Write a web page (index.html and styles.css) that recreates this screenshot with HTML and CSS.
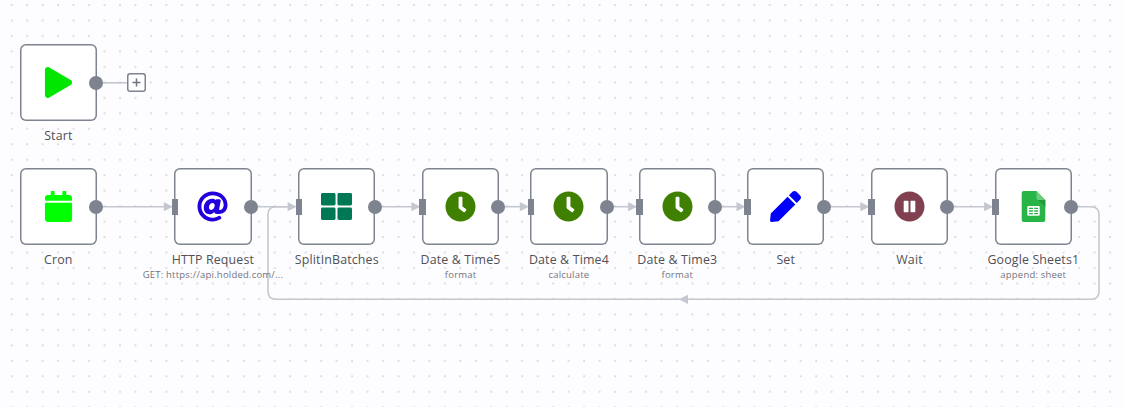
FILE: index.html
```
<!DOCTYPE html>
<html lang="en">
<head>
<meta charset="utf-8">
<title>Workflow</title>
<link rel="stylesheet" href="styles.css">
</head>
<body>
<main class="canvas">
  <svg class="wires" width="1123" height="407">
    <defs>
      <pattern id="grid" x="3.9" y="-2.8" width="15.47" height="15.47" patternUnits="userSpaceOnUse">
        <rect class="dot" x="6.9" y="6.9" width="1.9" height="1.9"/>
      </pattern>
      <path id="arrow" d="M-8.5-4.6L.5 0l-9 4.6z"/>
    </defs>
    <rect width="1123" height="407" fill="url(#grid)"/>
    <g class="line">
      <path d="M96 82.8H127"/>
      <path d="M96 206.7H166"/>
      <path d="M251 206.7H290"/>
      <path d="M375 206.7H414"/>
      <path d="M499 206.7H522"/>
      <path d="M607 206.7H630"/>
      <path d="M715 206.7H738"/>
      <path d="M824 206.7H862"/>
      <path d="M948 206.7H986"/>
      <path d="M1071 206.7H1091Q1099 206.7 1099 214.7V291.3Q1099 299.3 1091 299.3H276Q268 299.3 268 291.3V214.7Q268 206.7 276 206.7H290"/>
    </g>
    <g class="arrows">
      <use href="#arrow" x="172.3" y="206.7"/>
      <use href="#arrow" x="296.1" y="206.7"/>
      <use href="#arrow" x="419.9" y="206.7"/>
      <use href="#arrow" x="528.3" y="206.7"/>
      <use href="#arrow" x="636.6" y="206.7"/>
      <use href="#arrow" x="745" y="206.7"/>
      <use href="#arrow" x="868.8" y="206.7"/>
      <use href="#arrow" x="992.6" y="206.7"/>
      <path d="M688 294.7L679 299.3l9 4.6z"/>
    </g>
  </svg>

  <section class="node" style="left:58.3px;top:82.7px">
    <div class="box"><svg class="icon" viewBox="-32 0 512 512" fill="#00e600"><path d="M424.4 214.7L72.4 6.6C43.8-10.3 0 6.1 0 47.9V464c0 37.5 40.7 60.1 72.4 41.3l352-208c31.4-18.5 31.5-64.1 0-82.6z"/></svg><i class="out"></i></div>
    <div class="name">Start</div>
  </section>
  <button class="plus" aria-label="Add node"><svg width="9" height="9"><path d="M4.5 .5v8M.5 4.5h8"/></svg></button>

  <section class="node" style="left:58.3px;top:206.6px">
    <div class="box"><svg class="icon" viewBox="-32 0 512 512" fill="#00ff00"><path d="M12 192h424c6.6 0 12 5.400 12 12v260c0 26.500-21.500 48-48 48H48c-26.500 0-48-21.500-48-48V204c0-6.600 5.400-12 12-12zm436-44v-36c0-26.500-21.500-48-48-48h-48V12c0-6.600-5.400-12-12-12h-40c-6.600 0-12 5.400-12 12v52H160V12c0-6.600-5.400-12-12-12h-40c-6.600 0-12 5.400-12 12v52H48C21.500 64 0 85.500 0 112v36c0 6.600 5.400 12 12 12h424c6.600 0 12-5.400 12-12z"/></svg><i class="out"></i></div>
    <div class="name">Cron</div>
  </section>

  <section class="node" style="left:212.9px;top:206.6px">
    <div class="box"><svg class="icon" viewBox="0 0 512 512" fill="#2200dd"><path d="M256 8C118.941 8 8 118.919 8 256c0 137.059 110.919 248 248 248 48.154 0 95.342-14.140 135.408-40.223 12.005-7.815 14.625-24.288 5.552-35.372l-10.177-12.433c-7.671-9.371-21.179-11.667-31.373-5.129C325.920 429.757 291.314 440 256 440c-101.458 0-184-82.542-184-184S154.542 72 256 72c100.139 0 184 57.619 184 160 0 38.786-21.093 79.742-58.170 83.693-17.349-.454-16.910-12.857-13.476-30.024l23.433-121.110C394.653 149.750 383.308 136 368.225 136h-44.981a13.518 13.518 0 0 0-13.432 11.993l-.010.092c-14.697-17.901-40.448-21.775-59.971-21.775-74.580 0-137.831 62.234-137.831 151.460 0 65.303 36.785 105.870 96 105.870 26.984 0 57.369-15.637 74.991-38.333 9.522 34.104 40.613 34.104 70.710 34.104C462.609 379.410 504 307.798 504 232 504 95.653 394.023 8 256 8zm-21.680 304.430c-22.249 0-36.070-15.623-36.070-40.771 0-44.993 30.779-72.729 58.624-72.729 22.292 0 35.601 15.241 35.601 40.770 0 45.061-33.875 72.730-58.155 72.730z"/></svg><i class="in"></i><i class="out"></i></div>
    <div class="name">HTTP Request</div><div class="sub">GET: https://api.holded.com/...</div>
  </section>

  <section class="node" style="left:336.8px;top:206.6px">
    <div class="box"><svg class="icon" viewBox="0 0 512 512" fill="#007755"><path d="M296 32h192c13.255 0 24 10.745 24 24v160c0 13.255-10.745 24-24 24H296c-13.255 0-24-10.745-24-24V56c0-13.255 10.745-24 24-24zm-80 0H24C10.745 32 0 42.745 0 56v160c0 13.255 10.745 24 24 24h192c13.255 0 24-10.745 24-24V56c0-13.255-10.745-24-24-24zM0 296v160c0 13.255 10.745 24 24 24h192c13.255 0 24-10.745 24-24V296c0-13.255-10.745-24-24-24H24c-13.255 0-24 10.745-24 24zm296 184h192c13.255 0 24-10.745 24-24V296c0-13.255-10.745-24-24-24H296c-13.255 0-24 10.745-24 24v160c0 13.255 10.745 24 24 24z"/></svg><i class="in"></i><i class="out"></i></div>
    <div class="name">SplitInBatches</div>
  </section>

  <section class="node" style="left:460.600px;top:206.6px">
    <div class="box"><svg class="icon" viewBox="0 0 512 512" fill="#408000"><path id="clock" d="M256,8C119,8,8,119,8,256S119,504,256,504,504,393,504,256,393,8,256,8Zm92.490,313h0l-20,25a16,16,0,0,1-22.490,2.500h0l-67-49.720a40,40,0,0,1-15-31.230V112a16,16,0,0,1,16-16h32a16,16,0,0,1,16,16V256l58,42.500A16,16,0,0,1,348.490,321Z"/></svg><i class="in"></i><i class="out"></i></div>
    <div class="name">Date &amp; Time5</div><div class="sub">format</div>
  </section>

  <section class="node" style="left:568.9px;top:206.6px">
    <div class="box"><svg class="icon" viewBox="0 0 512 512" fill="#408000"><use href="#clock"/></svg><i class="in"></i><i class="out"></i></div>
    <div class="name">Date &amp; Time4</div><div class="sub">calculate</div>
  </section>

  <section class="node" style="left:677.3px;top:206.6px">
    <div class="box"><svg class="icon" viewBox="0 0 512 512" fill="#408000"><use href="#clock"/></svg><i class="in"></i><i class="out"></i></div>
    <div class="name">Date &amp; Time3</div><div class="sub">format</div>
  </section>

  <section class="node" style="left:785.7px;top:206.6px">
    <div class="box"><svg class="icon" viewBox="0 0 512 512" fill="#0000ff"><path d="M290.740 93.240l128.020 128.020-277.990 277.990-114.140 12.600C11.350 513.540-1.560 500.620.140 485.340l12.700-114.220 277.900-277.880zm207.200-19.060l-60.110-60.110c-18.750-18.750-49.160-18.750-67.910 0l-56.550 56.550 128.020 128.020 56.550-56.550c18.750-18.760 18.750-49.160 0-67.910z"/></svg><i class="in"></i><i class="out"></i></div>
    <div class="name">Set</div>
  </section>

  <section class="node" style="left:909.5px;top:206.6px">
    <div class="box"><svg class="icon" viewBox="0 0 512 512" fill="#804050"><path d="M256 8C119 8 8 119 8 256s111 248 248 248 248-111 248-248S393 8 256 8zm-16 328c0 8.800-7.200 16-16 16h-48c-8.800 0-16-7.200-16-16V176c0-8.800 7.200-16 16-16h48c8.800 0 16 7.200 16 16v160zm112 0c0 8.800-7.200 16-16 16h-48c-8.800 0-16-7.200-16-16V176c0-8.800 7.200-16 16-16h48c8.800 0 16 7.200 16 16v160z"/></svg><i class="in"></i><i class="out"></i></div>
    <div class="name">Wait</div>
  </section>

  <section class="node" style="left:1033.3px;top:206.6px">
    <div class="box"><svg class="icon" viewBox="0 0 31 31"><path fill="#28b446" d="M5.700 0H18.500L27.300 9V29a2 2 0 0 1-2 2H5.700a2 2 0 0 1-2-2V2a2 2 0 0 1 2-2z"/><path fill="#219b3b" d="M20 9h7.300v7z"/><path fill="#6ace7c" d="M18.500 0L27.300 9H20.500a2 2 0 0 1-2-2z"/><path fill="#fff" fill-rule="evenodd" d="M10.300 15h10.400a1 1 0 0 1 1 1v7.700a1 1 0 0 1-1 1H10.300a1 1 0 0 1-1-1V16a1 1 0 0 1 1-1zM11 16.700v1.400h3.900v-1.400zM16.200 16.700v1.400H20v-1.400zM11 19.300v1.400h3.900v-1.400zM16.200 19.300v1.400H20v-1.400zM11 21.900v1.400h3.900v-1.400zM16.200 21.900v1.400H20v-1.400z"/></svg><i class="in"></i><i class="out"></i></div>
    <div class="name">Google Sheets1</div><div class="sub">append: sheet</div>
  </section>
</main>
</body>
</html>
```
FILE: styles.css
```
body { margin: 0; }
.canvas {
  position: relative;
  width: 1123px;
  height: 407px;
  overflow: hidden;
  background: #fdfdff;
  font-family: "Open Sans", sans-serif;
}
.wires { display: block; }
.dot { fill: #d9dadf; }
.line path { fill: none; stroke: #c5c7d0; stroke-width: 1.6; }
.arrows { fill: #c5c7d0; }

/* Nodes are anchored on the centre of their box */
.node {
  position: absolute;
  display: flex;
  flex-direction: column;
  align-items: center;
  width: 160px;
  margin: -38.700px 0 0 -80px;
}
.box {
  position: relative;
  display: flex;
  align-items: center;
  justify-content: center;
  box-sizing: border-box;
  width: 77.400px;
  height: 77.400px;
}
.box::before {
  content: "";
  position: absolute;
  inset: 0;
  border-radius: 6px;
  background: #fff;
  box-shadow: inset 0 0 0 1.500px #7d838f;
}
.icon { position: relative; width: 31px; height: 31px; }
.in, .out { position: absolute; background: #7d838f; }
.in { left: -2.600px; top: 30.800px; width: 6.800px; height: 16px; }
.out { right: -6.200px; top: 31.700px; width: 14px; height: 14px; border-radius: 50%; }
.name {
  margin-top: 6px;
  font-size: 12.400px;
  line-height: 17px;
  letter-spacing: .15px;
  color: #505055;
  white-space: nowrap;
}
.sub {
  font-size: 9.500px;
  line-height: 13px;
  letter-spacing: .2px;
  color: #73737c;
  white-space: nowrap;
}
.plus {
  position: absolute;
  left: 127px;
  top: 73px;
  display: flex;
  align-items: center;
  justify-content: center;
  box-sizing: border-box;
  width: 19px;
  height: 19px;
  padding: 0;
  border: 0;
  border-radius: 3px;
  background: #fff;
  box-shadow: inset 0 0 0 1.500px #7d838f;
}
.plus path { stroke: #6d7380; stroke-width: 1.500; }
```
